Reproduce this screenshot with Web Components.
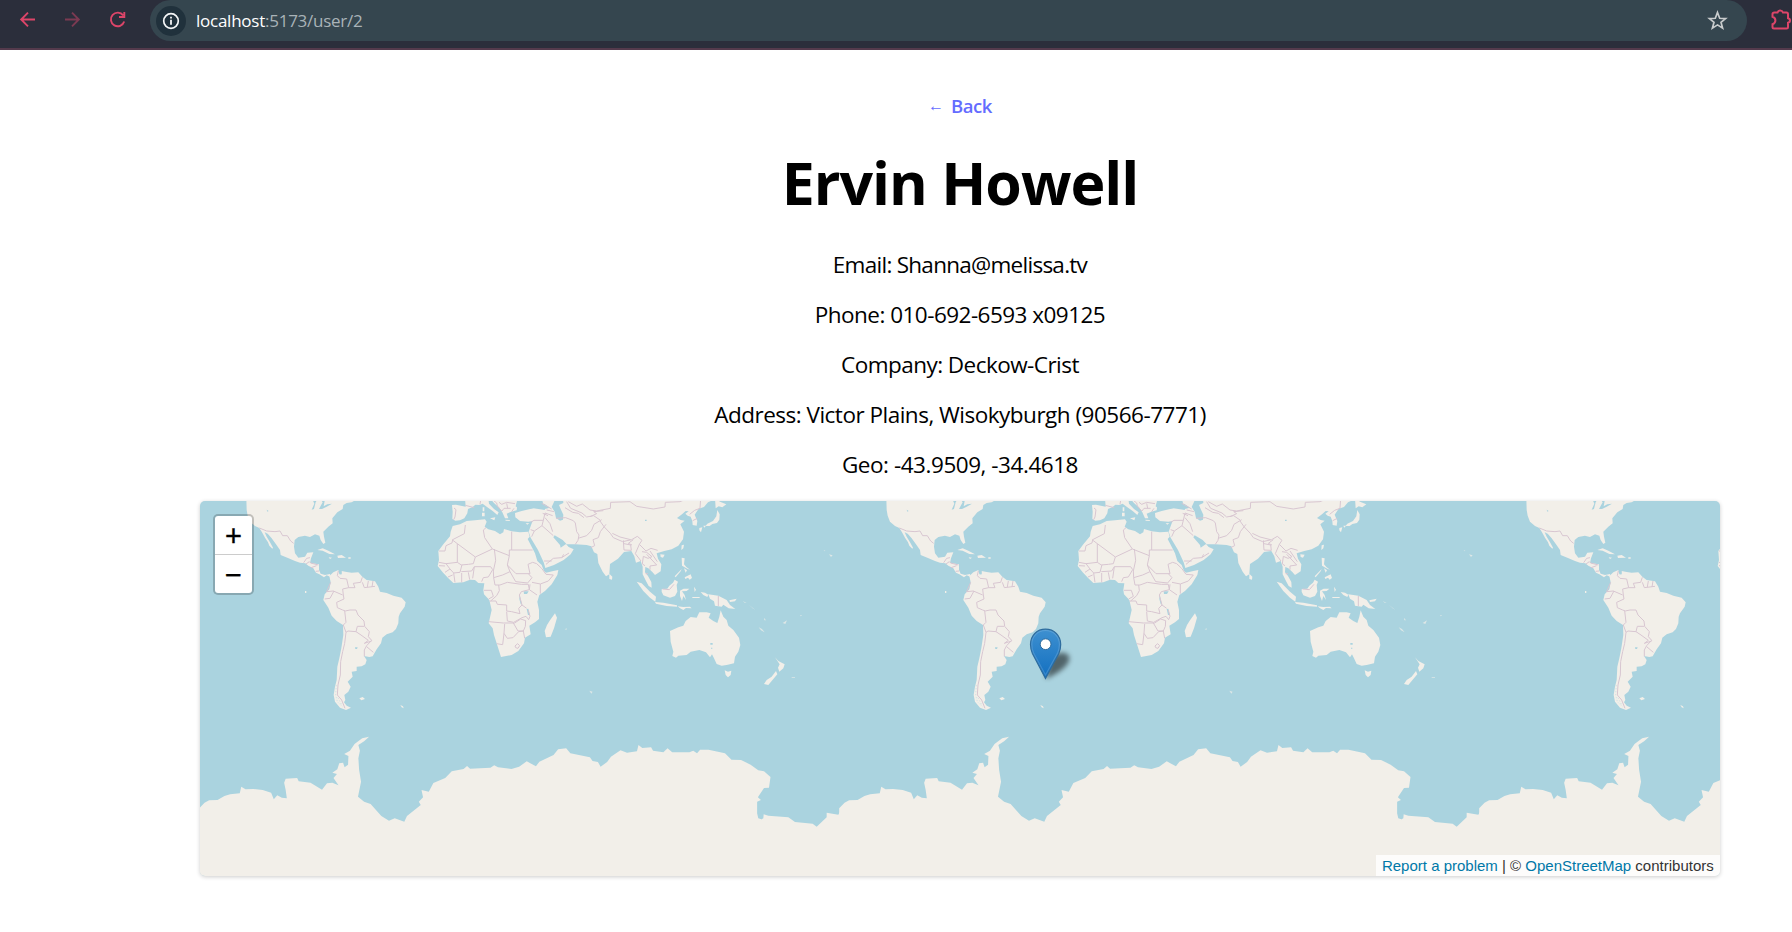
<!DOCTYPE html>
<html lang="en">
<head>
<meta charset="utf-8">
<title>Ervin Howell</title>
<style>
html,body{margin:0;height:100%;background:#fff;overflow:hidden}
body{font-family:"Open Sans","Noto Sans",sans-serif;color:#000}
</style>
</head>
<body>
<browser-bar><span slot="host">localhost</span><span slot="path">:5173/user/2</span></browser-bar>
<user-page>
  <back-link slot="back">Back</back-link>
  <span slot="name">Ervin Howell</span>
  <info-line style="letter-spacing:-.73px">Email: Shanna@melissa.tv</info-line>
  <info-line style="letter-spacing:-.53px">Phone: 010-692-6593 x09125</info-line>
  <info-line style="letter-spacing:-.54px">Company: Deckow-Crist</info-line>
  <info-line style="letter-spacing:-.5px">Address: Victor Plains, Wisokyburgh (90566-7771)</info-line>
  <info-line style="letter-spacing:-.46px">Geo: -43.9509, -34.4618</info-line>
  <world-map slot="map"></world-map>
</user-page>
<script>
const define=(name,html)=>customElements.define(name,class extends HTMLElement{
  constructor(){super();const t=document.createElement('template');t.innerHTML=html;
    this.attachShadow({mode:'open'}).append(t.content.cloneNode(true));}
});

define('browser-bar',`<style>
:host{display:flex;box-sizing:border-box;height:50px;background:#2b2e3b;border-bottom:2px solid #543a4c;align-items:flex-start;overflow:hidden}
.nav{display:flex;width:150px;height:40px;flex:none}
svg{display:block;flex:none}
.pill{display:flex;align-items:center;box-sizing:border-box;width:1597px;height:41px;border-radius:20.5px;background:#35464f;padding:0 19px 0 6px;flex:none}
.url{flex:1;margin-left:10px;font-size:17px;line-height:40px;color:#a9b3b8;white-space:nowrap;letter-spacing:-.25px}
.host{color:#fff}
</style>
<div class="nav"><svg width="150" height="40" fill="none" stroke="#dd4569" stroke-width="1.9"><path d="M35 19.500H21M28 12.700L21.200 19.500L28 26.300"/><path stroke="#7c3a52" d="M65 19.500H79M72 12.700L78.800 19.500L72 26.300"/><path d="M123.200 15.400A6.800 6.800 0 1 0 124.200 21.500M124.300 12v5h-5.300"/></svg></div>
<div class="pill"><svg width="30" height="30"><circle cx="15" cy="15" r="15" fill="#20313c"/><circle cx="15" cy="15" r="7.300" fill="none" stroke="#f4f6f7" stroke-width="1.700"/><path d="M15 13.700v5M15 10.700v1.900" stroke="#f4f6f7" stroke-width="1.800"/></svg>
<div class="url"><span class="host"><slot name="host"></slot></span><slot name="path"></slot></div>
<svg width="22" height="22" viewBox="0 0 22 22"><path d="M11.500 2.500L13.700 8.300L19.600 8.600L15 12.300L16.600 18.100L11.500 14.900L6.400 18.100L8 12.300L3.400 8.600L9.300 8.300Z" fill="none" stroke="#c9cccd" stroke-width="1.700"/></svg></div>
<svg width="45" height="40"><path d="M27.500 12.500H30.500Q31.200 10.400 33.200 10.400T36 12.500H39.500Q41 12.500 41 14V18.200Q43 18.600 43 20.500T41 22.800V27Q41 28.500 39.500 28.500H27Q25.500 28.500 25.500 27V24.200Q28.400 23.200 28.400 20.500T25.500 16.800V14Q25.500 12.500 27.500 12.500Z" fill="none" stroke="#dd4569" stroke-width="2"/></svg>`);

define('user-page',`<style>
:host{display:flex;flex-direction:column;align-items:center;box-sizing:border-box;width:1520px;margin-left:200px;padding-top:40px}
.back{height:32px;display:flex;align-items:center}
h1{margin:27px 0 0;height:66px;font-size:59px;line-height:66px;font-weight:700;white-space:nowrap;letter-spacing:-1px}
.lines{display:flex;flex-direction:column;align-items:center;padding-top:24.5px;height:286px;box-sizing:border-box}
</style><div class="back"><slot name="back"></slot></div><h1><slot name="name"></slot></h1><div class="lines"><slot></slot></div><slot name="map"></slot>`);

define('back-link',`<style>
:host{display:flex;align-items:center;gap:7px;color:#646cff;font-size:18.5px;font-weight:600;line-height:32px}
a{letter-spacing:-.4px}.arrow{font:400 16px "Liberation Serif",serif}
</style><span class="arrow">←</span><a><slot></slot></a>`);

define('info-line',`<style>:host{display:block;flex:none;height:50px;line-height:50px;font-size:22.5px;white-space:nowrap}</style><slot></slot>`);

define('map-zoom',`<style>
:host{position:absolute;left:13px;top:13px;width:37px;border:2px solid rgba(0,0,0,.2);border-radius:5px;background:#fff;background-clip:padding-box}
span{display:block;height:38px;text-align:center;font:400 29px/40px "Liberation Sans",Arial,sans-serif;-webkit-text-stroke:.4px #000;color:#000}
span+span{border-top:1px solid #ccc;height:37.500px}
</style><span>+</span><span>−</span>`);

define('map-credit',`<style>
:host{position:absolute;right:0;bottom:0;height:21px;line-height:21px;padding:0 6.250px;background:rgba(255,255,255,.8);color:#333;font-family:"Liberation Sans",Arial,sans-serif;font-size:15px;white-space:nowrap}
a{color:#0078a8}
</style><a>Report a problem</a> | © <a>OpenStreetMap</a> contributors`);

define('world-map',`<style>
:host{display:block;position:relative;width:1520px;height:375px;border-radius:5px;overflow:hidden;background:#aad3df;box-shadow:0 1px 4px rgba(0,0,0,.2)}
svg{display:block}
.pin{position:absolute;left:829px;top:126px}
</style>
<svg width="1520" height="375" viewBox="0 0 1520 375">
<defs>
<g id="world" fill="#f2efe9" stroke-linejoin="round">
 <!-- the Americas -->
 <g transform="translate(0,-6) scale(.33333)">
  <path d="M139 10L140 45L143 62L150 80L165 93L178 99L186 112L195 128L204 142L208 152L217 161L219 158L210 142L200 125L194 112L203 116L215 130L228 148L240 165L242 180L262 188L285 198L300 203L316 205L325 212L340 220L348 233L358 238L372 247L380 241L392 246L390 237L375 240L362 236L357 225L357 208L345 206L330 204L333 190L340 172L322 173L315 185L295 188L285 175L282 155L284 135L295 126L315 122L330 126L345 118L358 122L362 135L370 147L376 143L372 125L370 110L385 95L398 85L397 70L412 52L428 42L430 30L440 24L455 22L475 10Z"/>
  <path d="M388 243L400 232L415 225L418 238L425 238L425 228L440 231L455 233L475 232L487 245L500 255L525 259L535 275L540 290L560 294L580 302L605 308L617 322L614 335L600 355L596 365L595 385L588 402L578 412L560 418L547 428L543 445L530 463L518 484L508 486L492 483L500 495L496 508L485 514L470 515L470 528L455 530L458 545L443 560L452 575L445 590L433 600L436 615L432 622L440 632L453 638L438 645L420 638L405 620L401 600L405 575L410 555L412 515L418 490L424 460L430 420L429 390L410 378L395 362L385 338L370 315L374 298L388 283L392 262Z"/>
  <path d="M352 165L368 160L385 167L405 178L388 177L368 167ZM412 182L425 180L438 188L414 189ZM386 187L396 188L390 192ZM445 187h7v4h-7ZM478 610L488 606L495 612L484 616ZM601 630L609 634L611 640L605 637ZM315 288h4v6h-4Z"/>
  <path fill="#aad3df" d="M336 10L343 26L335 44L342 42L347 22L354 10ZM360 10L368 22L357 42L366 42L380 35L396 26L382 28L371 34L374 18L385 10ZM200 44l6 4-4 2ZM420 229l4 0v9h-4ZM465 457l8 0-2 5h-5Z"/>
  <path fill="none" stroke="#aad3df" stroke-width="2" stroke-dasharray="4 5" opacity=".7" d="M409 570L407 600L412 620L428 636M414 608L424 628"/>
  <g fill="none" stroke="#d8c6d1" stroke-width="3"><path d="M178 99L200 108L225 110L240 108L248 122L262 122L272 138L281 145M311 203L320 190L330 188M318 207L328 200L332 204L355 210M333 218L350 212M347 229L357 228M415 228L412 242L420 250L440 252L446 278L428 282L430 300L432 312L410 322L412 338L428 345L436 348L450 345L468 345L474 360L492 378L494 394L508 410L505 425L515 436L500 452L493 465L493 484M392 262L380 290L400 288L428 300M374 312L390 310L402 288M446 278L465 278L460 265L482 262L487 247M487 262L493 278L525 274M505 258L502 276M519 258L516 276M434 347L438 382L430 390L438 412L444 408L468 410L472 394L492 394M468 410L483 420L505 436L493 445L515 438M500 455L520 472M438 412L434 445L428 470L422 500L421 540L414 570L412 600L425 615L435 640"/></g>
 </g>
 <!-- Europe, Africa, Asia and Oceania -->
 <g transform="translate(220,-6) scale(.33333)">
  <path d="M98 93L120 88L140 78L165 76L195 73L200 80L194 95L205 103L225 108L240 118L250 112L252 102L275 109L300 112L325 110L329 125L323 132L335 155L345 175L352 198L365 210L372 228L378 233L400 228L415 225L412 240L395 268L375 288L358 300L352 320L357 345L357 372L345 382L328 392L332 418L315 428L312 445L295 468L275 480L243 486L238 470L230 445L222 420L218 400L206 385L215 345L208 315L192 298L190 285L193 265L175 264L165 255L150 254L130 262L100 264L85 250L68 232L53 213L57 195L55 168L70 148L90 124L92 110Z"/>
  <path d="M96 30L108 29L137 35L135 10H205L207 26L222 42L236 52L232 60L218 48L200 35L188 26L178 30L166 29L158 36L144 42L142 55L133 70L120 76L106 77L97 72L98 50ZM210 10L222 24L238 38L247 52L255 70L265 70L260 56L274 50L290 46L292 30L290 10ZM186 53h8v11h-8ZM188 37h5v12h-5ZM210 70L226 67L223 76ZM256 74L270 75L269 78L257 77ZM317 85L328 84L322 89Z"/>
  <path d="M285 54L305 48L340 40L375 45L365 10H890L864 22L852 36L836 41L824 59L832 78L830 92L818 90L817 78L812 65L803 62L796 56L806 49L797 48L786 58L771 69L782 75L794 77L781 88L792 110L789 133L775 152L755 163L733 168L710 175L714 191L724 208L722 229L705 240L697 231L685 220L676 216L675 232L684 243L694 261L695 278L686 273L678 258L668 238L668 215L662 198L648 203L643 184L634 168L612 171L594 191L570 207L568 238L558 244L548 230L535 204L532 177L522 172L514 154L500 150L466 148L440 148L428 135L404 121L400 127L420 150L422 158L438 147L446 156L461 163L452 178L431 195L402 210L376 219L371 202L354 165L332 128L326 110L334 88L338 78L325 80L300 78L286 67Z"/>
  <path fill="#aad3df" d="M293 10L287 34L301 46L323 41L349 38L372 43L390 38L374 27L356 23L350 10ZM407 10L395 36L404 50L408 69L420 77L429 74L430 59L422 42L417 30L430 24L429 10ZM311 289l15 0-5 8h-9ZM299 300l4 18 4 11-5-2-4-15ZM320 342l5-1 4 19-5 0ZM675 74h5v4h-5Z"/>
  <path d="M885 10L900 20L919 28L907 37L896 34L887 40ZM892 45L899 58L898 74L891 84L877 87L869 93L857 92L862 86L879 78L889 64ZM838 99L847 97L843 112L838 106ZM850 92L858 92L853 98ZM785 151L792 149L790 160L784 165ZM721 178L734 179L729 188L722 186Z"/>
  <path d="M405 355L411 368L402 400L392 425L378 427L374 408L381 390L390 376ZM568 236L577 245L576 254L568 252ZM650 260L665 265L690 290L708 305L706 320L690 308L670 288ZM705 321L730 323L771 331L771 335L740 333L708 326ZM725 283L742 281L748 272L759 263L764 254L774 260L770 270L772 290L765 303L750 308L730 301L725 290ZM785 188L794 190L792 208L799 216L810 224L802 221L786 212ZM792 220L801 226L797 233ZM794 247L812 238L816 249L809 254L804 248L796 252ZM764 244L785 222L782 229L767 247ZM780 287L791 281L808 281L800 288L786 289L794 300L798 315L790 303L786 318L780 303ZM822 275L828 284L824 291ZM842 291L855 293L865 299L862 306L850 300ZM865 298L895 302L920 315L930 330L946 342L926 340L910 329L905 335L885 332L882 319L870 311ZM928 316L950 311L945 319L930 321ZM773 334L790 336L810 335L815 340L798 339L790 345L779 339ZM817 306h22v3h-22Z"/>
  <path d="M750 408L775 397L790 392L797 378L812 366L830 368L838 352L860 352L872 355L866 368L880 378L892 384L898 365L902 346L910 365L920 375L925 392L940 405L957 428L961 450L955 470L945 485L942 505L920 510L905 512L890 507L882 490L876 478L870 487L858 472L838 465L812 470L800 480L775 482L768 488L757 483L760 470L752 440ZM914 526L924 530L934 527L932 540L924 547L917 540ZM1065 487L1075 498L1094 508L1090 520L1078 530L1074 518L1079 508ZM1068 528L1072 538L1055 558L1045 570L1032 567L1040 555L1055 545Z"/>
  <path opacity=".7" d="M508 587L518 590L514 596ZM1016 397L1026 402L1034 412L1023 406ZM1088 384L1101 376L1096 387ZM1227 178L1238 181L1233 186ZM1211 165l5 2-2 2ZM968 318L980 324L974 323ZM985 328L1006 345L998 340ZM1032 368l6 8-5 0ZM1115 547h10v2h-10ZM1140 360l7 2-5 2ZM434 403l6-3 0 4Z"/>
  <path fill="#aad3df" d="M871 444h7v5h-7ZM873 458h4v3h-4Z"/>
  <g fill="none" stroke="#d8c6d1" stroke-width="3"><path d="M57 168H75L78 152L96 144L98 134L133 116L136 90M96 134L112 146V202L78 206L57 202M112 146L166 186L217 162L194 128L190 105L198 98M217 162L268 182V165H275V110M275 165H338M166 186L160 206L145 208L124 210L112 202M268 182L262 210L270 230L248 240L221 248L220 228L227 196L223 162M163 215H212L218 224L205 246L190 248L185 260M78 206L90 222L75 232M57 212L75 213M90 222L101 234L120 232L126 209M101 234L105 262M125 234V262M145 232L149 254M124 230L155 228L163 215M158 250L163 215M84 246L98 240M262 210L288 236L330 236L324 208L338 202L350 206M270 230L287 260L323 264L336 248L325 236M350 206L365 220L378 238L400 240L385 258L361 267L336 262M361 267V296M330 268L328 284L351 300M304 268H325L328 284L304 290L298 300L306 330L320 340M221 248L225 270L240 270L262 262L304 268M236 270L238 287L230 302L212 318M192 286H214L220 304L206 312M209 318H228L232 328L260 330V348L275 350L300 356L296 340L306 330M260 350L262 378L281 382L306 368L318 364L326 374L330 364L325 345M206 380L250 384L284 384L302 372L317 377L316 394L310 408H294L280 384M254 387L252 415L248 449L230 446M252 415L262 430L279 428L296 410L310 408L314 430M285 453L293 446L299 452L294 460L287 458Z"/><path d="M102 39L108 44L105 66L101 74M136 31L163 38M183 10L180 28M215 12L230 24L232 33L245 48M237 22L245 28L260 22L285 26M246 48L252 40L272 40M260 25L263 40M282 40L275 50M332 82L342 76L370 76L375 54L398 62M370 76L366 92L343 108L332 104M343 108L335 125M366 92L400 122M380 45L402 50M365 25L395 42M375 68L390 86L398 110M368 55L384 62M435 38L458 52L475 55L492 68M408 70L437 68L460 77L466 84L470 110L477 120L474 136L466 148M440 20L452 40L486 54L500 66L521 62L540 75M445 20L470 34L487 27L510 45L530 48L571 40L572 22L630 20L650 34L700 42L735 36L736 22L780 20L804 10M510 65L530 56L521 50L550 47M474 130L500 122L515 106L522 88L545 74M540 78L552 95L571 115L580 128L608 140L635 134L652 124L666 136L658 148L678 168L693 160L713 166M558 88L541 110L535 128L519 134L524 152L512 158M577 115L600 126L632 134M610 136L612 165L634 166L632 150L612 146M636 150L625 145L640 134M658 148L646 176L663 198M378 208L400 190L425 188L431 178M372 198L395 198M425 188L447 174M666 170L680 172L696 185L684 190L670 184L667 207L675 212M680 178L710 210L690 213L690 224M690 168L712 200M809 58L824 46L840 40L842 10M818 77L832 70M895 303V333M728 282L748 284L762 268M677 236L684 236"/></g>
 </g>
 <!-- Antarctica -->
 <path transform="translate(-10,199) scale(.38267,.33333)" d="M24 325L38 308L50 301L72 300L90 288L105 283L130 280L134 260L145 268L165 267L190 270L212 278L219 298L228 286L240 293L253 295L250 270L246 248L250 236L280 234L284 244L315 248L345 269L358 250L372 248L388 256L375 234L384 222L372 218L385 208L390 190L400 188L404 202L413 194L414 168L403 162L418 152L430 132L450 115L468 110L455 124L440 135L444 152L440 175L442 210L447 245L439 290L455 305L472 312L500 348L520 362L535 355L560 365L567 348L603 315L598 305L609 292L605 270L624 275L636 249L667 234L684 214L715 207L724 198L732 206L785 203L795 196L805 202L840 207L860 200L880 184L904 199L913 185L950 165L962 148L983 145L994 160L1045 172L1052 183L1066 186L1073 200L1090 186L1100 170L1125 151L1142 158L1168 154L1172 135L1182 144L1205 142L1210 152L1237 157L1248 145L1260 157L1305 157L1315 152L1325 160L1333 149L1355 149L1398 160L1415 179L1440 180L1465 194L1485 211L1500 214L1517 231L1513 263L1500 264L1484 292L1492 300L1482 305L1482 340L1485 355L1493 358V620H24Z"/>
 <path transform="translate(520,199) scale(.33333)" d="M112 355L120 361L130 355L131 343L145 347L205 352L225 366L278 371L290 380L320 352L320 338L355 344L366 324V620H112Z"/>
</g>
</defs>
<use href="#world" x="-640"/><use href="#world"/><use href="#world" x="640"/><use href="#world" x="1280"/>
</svg>
<svg class="pin" width="60" height="56" viewBox="0 0 60 56">
<defs><linearGradient id="blue" x2="0" y2="1"><stop offset="0" stop-color="#3e90d0"/><stop offset="1" stop-color="#126fc0"/></linearGradient><filter id="soft" x="-50%" y="-50%" width="200%" height="200%"><feGaussianBlur stdDeviation="2.800"/></filter></defs>
<path d="M16.500 52L22 30Q34 22 40 29Q43 40 16.500 52Z" fill="#000" opacity=".52" filter="url(#soft)"/>
<path d="M16.500 51.500L3.400 26.500Q1.500 22 1.500 17.500C1.500 8.500 8 2.200 16.500 2.200S31.700 8.500 31.700 17.500Q31.700 22 29.800 26.500Z" fill="url(#blue)" stroke="#2e6c9e" stroke-width="1.200"/>
<path d="M16.500 48L4.600 26Q2.800 22 2.800 17.500C2.800 9.300 8.700 3.500 16.500 3.500S30.400 9.300 30.400 17.500Q30.400 22 28.600 26Z" fill="none" stroke="#fff" stroke-opacity=".15" stroke-width="1.200"/>
<circle cx="16.600" cy="17.200" r="5.400" fill="#fff" stroke="#2e6c9e" stroke-width="1"/></svg>
<map-zoom></map-zoom><map-credit></map-credit>`);
</script>
</body>
</html>
